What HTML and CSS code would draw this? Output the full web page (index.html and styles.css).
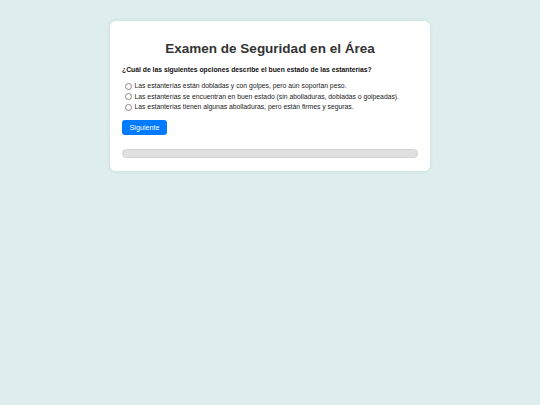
FILE: index.html
```html
<!DOCTYPE html>
<html lang="es">
<head>
<meta charset="utf-8">
<title>Examen de Seguridad en el Área</title>
<link rel="stylesheet" href="styles.css">
</head>
<body>
<div class="card">
  <h1 class="title">Examen de Seguridad en el Área</h1>
  <p class="question">¿Cuál de las siguientes opciones describe el buen estado de las estanterías?</p>
  <div class="options">
    <label class="option"><span class="radio"></span>Las estanterías están dobladas y con golpes, pero aún soportan peso.</label>
    <label class="option"><span class="radio"></span>Las estanterías se encuentran en buen estado (sin abolladuras, dobladas o golpeadas).</label>
    <label class="option"><span class="radio"></span>Las estanterías tienen algunas abolladuras, pero están firmes y seguras.</label>
  </div>
  <button class="btn">Siguiente</button>
  <div class="progress"><div class="progress-fill"></div></div>
</div>
</body>
</html>
```
FILE: styles.css
```css
html, body {
  margin: 0;
  padding: 0;
}
body {
  background: #deeded;
  font-family: "Liberation Sans", Arial, sans-serif;
  width: 540px;
  height: 405px;
  padding-top: 21px;
  box-sizing: border-box;
}
.card {
  width: 320px;
  margin: 0 auto;
  background: #fff;
  border-radius: 6px;
  box-shadow: 0 0 5px rgba(0,0,0,0.08);
  padding: 19px 12px 13px;
  box-sizing: border-box;
}
.title {
  margin: 0;
  text-align: center;
  font-size: 13.5px;
  font-weight: bold;
  color: #333;
  line-height: 18px;
}
.question {
  margin: 7px 0 6px;
  font-size: 6.8px;
  font-weight: bold;
  color: #111;
  line-height: 10px;
  white-space: nowrap;
}
.options {
  display: flex;
  flex-direction: column;
}
.option {
  display: flex;
  align-items: center;
  font-size: 6.8px;
  color: #222;
  line-height: 10.5px;
  height: 10.5px;
  white-space: nowrap;
}
.radio {
  width: 5px;
  height: 5px;
  border: 0.6px solid #888;
  border-radius: 50%;
  margin: 0 3px 0 2.5px;
  flex: none;
}
.btn {
  display: block;
  margin-top: 7.5px;
  width: 45px;
  height: 15px;
  background: #007bff;
  color: #fff;
  border: none;
  border-radius: 3px;
  font-family: "Liberation Sans", Arial, sans-serif;
  font-size: 7.2px;
  padding: 0;
}
.progress {
  margin-top: 14px;
  height: 9px;
  background: #e0e0e0;
  border: 1px solid #d2d2d2;
  box-sizing: border-box;
  border-radius: 5px;
  overflow: hidden;
}
.progress-fill {
  width: 0;
  height: 100%;
  background: #007bff;
}
```
